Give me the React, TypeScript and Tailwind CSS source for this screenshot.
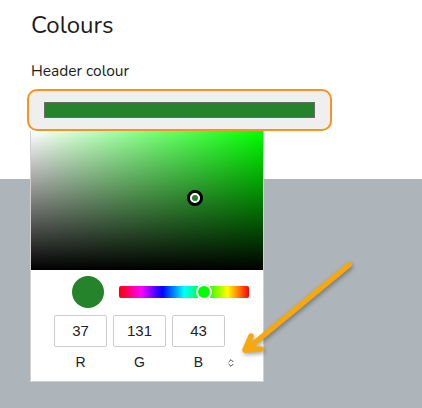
import React from 'react';
import { ChevronsUpDown } from 'lucide-react';

const rgb = [
  { label: 'R', value: '37' },
  { label: 'G', value: '131' },
  { label: 'B', value: '43' },
];

const ColourPopover = () => (
  <div className="absolute left-[3px] top-full w-[234px] h-[251px] bg-white border border-[#d0d0d0] border-t-0 z-10">
    {/* saturation / value square */}
    <div className="relative h-[139px] bg-[#00ff00]">
      <div className="absolute inset-0 bg-gradient-to-r from-white to-transparent" />
      <div className="absolute inset-0 bg-gradient-to-t from-black to-transparent" />
      <div className="absolute left-[156px] top-[59px] w-[16px] h-[16px] rounded-full border-[3px] border-black bg-[#25832b] flex items-center justify-center">
        <div className="w-[10px] h-[10px] rounded-full border-2 border-white bg-[#25832b]" />
      </div>
    </div>

    <div className="flex items-center pl-[41px] pt-[6px] gap-[15px]">
      <div className="w-[32px] h-[32px] rounded-full bg-[#25832b]" />
      <div className="relative w-[130px] h-[12px] rounded-[2px] bg-[linear-gradient(to_right,#ff0000,#ff00ff,#0000ff,#00ffff,#00ff00,#ffff00,#ff0000)]">
        <div className="absolute left-[77px] top-[-2px] w-[16px] h-[16px] rounded-full bg-[#00ff00] border-2 border-white shadow-[0_0_1px_rgba(0,0,0,0.3)]" />
      </div>
    </div>

    <div className="flex gap-[6px] pl-[23px] pt-[7px] font-['Liberation_Sans',Arial,sans-serif]">
      {rgb.map((c) => (
        <div key={c.label} className="flex flex-col items-center w-[53px]">
          <div className="w-[53px] h-[32px] border border-[#cccccc] rounded-[2px] flex items-center justify-center text-[15px] text-[#222]">
            {c.value}
          </div>
          <div className="mt-[7px] text-[14px] leading-[16px] text-[#222]">{c.label}</div>
        </div>
      ))}
      <div className="self-end mb-[2px] -ml-[5px] text-[#333]">
        <ChevronsUpDown size={10} strokeWidth={2.2} />
      </div>
    </div>
  </div>
);

export default function App() {
  return (
    <div className="relative w-[422px] h-[408px] overflow-hidden bg-[#adb5ba] font-['Nunito','Lato',sans-serif] text-[#1c1c1c]">
      <div className="bg-white h-[179px] px-[27px] pt-[8px]">
        <h1 className="pl-[4px] text-[24px] leading-[34px]">Colours</h1>
        <div className="pl-[4px] mt-[19px] text-[15.5px] leading-[20px]">Header colour</div>
        <div className="relative mt-[8px] w-[305px]">
          <div className="h-[42px] rounded-[10px] border-2 border-[#f7931e] bg-[#efefef] flex items-center px-[15px]">
            <div className="w-full h-[16px] bg-[#25832b] border border-[#6b6b6b]" />
          </div>
          <ColourPopover />
        </div>
      </div>

      <svg
        className="absolute left-0 top-0 pointer-events-none z-20 drop-shadow-[1px_2px_2px_rgba(0,0,0,0.35)]"
        width="422"
        height="408"
        viewBox="0 0 422 408"
      >
        <g stroke="#f7a80d" strokeWidth="5.5" strokeLinecap="round" strokeLinejoin="round" fill="none">
          <path d="M349 265 L246 350" />
          <path d="M251 336 L245 350 L261 349" />
        </g>
      </svg>
    </div>
  );
}
